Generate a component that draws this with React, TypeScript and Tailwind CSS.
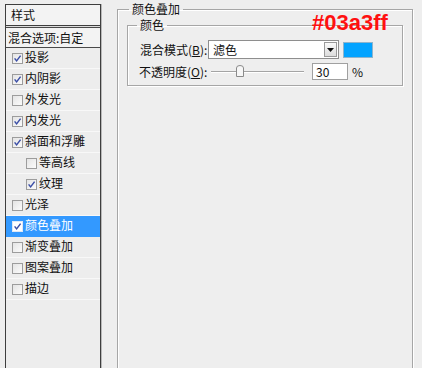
import React from "react";

interface StyleItem {
    label: string;
    checked: boolean;
    indent?: boolean;
    active?: boolean;
}

const items: StyleItem[] = [
    { label: "投影", checked: true },
    { label: "内阴影", checked: true },
    { label: "外发光", checked: false },
    { label: "内发光", checked: true },
    { label: "斜面和浮雕", checked: true },
    { label: "等高线", checked: false, indent: true },
    { label: "纹理", checked: true, indent: true },
    { label: "光泽", checked: false },
    { label: "颜色叠加", checked: true, active: true },
    { label: "渐变叠加", checked: false },
    { label: "图案叠加", checked: false },
    { label: "描边", checked: false },
];

const CheckBox: React.FC<{ checked: boolean; active?: boolean }> = ({ checked, active }) => (
    <span
        className={`flex w-[11px] h-[11px] shrink-0 items-center justify-center border ${
            active ? "border-[#dfe8f5] bg-white" : "border-[#9c9c9c] bg-gradient-to-br from-[#e4e4e4] to-[#fbfbfb]"
        }`}
    >
        {checked && (
            <svg width="9" height="9" viewBox="0 0 9 9">
                <path d="M1.6 4.4 L3.6 6.9 L7.6 1.6" stroke="#3b4ea6" strokeWidth="1.5" fill="none" />
            </svg>
        )}
    </span>
);

const StyleList: React.FC = () => (
    <div className="ml-[5px] mt-[4px] w-[96px] h-[380px] border border-[#3e3e3e] bg-[#ededed] shadow-[1px_0_0_#b8b8b8]">
        <div className="h-[21px] pl-[5px] flex items-center bg-[#f3f3f3] border-b border-[#3e3e3e]">样式</div>
        <div className="h-[1px] bg-[#dcdcdc]" />
        <div className="h-[21px] pl-[2px] flex items-center bg-[#f3f3f3] border-t border-b border-[#4a4a4a]">
            混合选项:自定
        </div>
        {items.map((it) => (
            <div
                key={it.label}
                className={`h-[21px] flex items-center gap-[2px] border-b ${
                    it.active ? "bg-[#3399ff] text-white border-[#3399ff]" : "border-[#f8f8f8]"
                } ${it.indent ? "pl-[20px]" : "pl-[6px]"}`}
            >
                <CheckBox checked={it.checked} active={it.active} />
                <span className="leading-none -mt-[2px]">{it.label}</span>
            </div>
        ))}
    </div>
);

const ColorOverlay: React.FC = () => (
    <div className="ml-[16px] pt-[1px] w-[296px]">
        <fieldset className="h-[400px] border border-[#a6a6a6] pl-[9px] pr-[9px] shadow-[inset_1px_1px_0_#fff,1px_1px_0_#fff]">
            <legend className="ml-[2px] px-[3px] leading-[16px]">颜色叠加</legend>
            <fieldset className="border border-[#a6a6a6] pl-[9px] pt-[7px] pb-[5px] shadow-[inset_1px_1px_0_#fff,1px_1px_0_#fff]">
                <legend className="px-[3px] leading-[16px]">颜色</legend>
                <div className="pl-[3px] flex items-center h-[19px]">
                    <span className="w-[68px]">
                        混合模式(<span className="underline">B</span>):
                    </span>
                    <div className="w-[131px] h-[19px] bg-white border border-[#8e8e8e] flex items-center justify-between pl-[4px] pr-[1px]">
                        <span className="leading-none">滤色</span>
                        <span className="w-[13px] h-[15px] border border-[#9a9a9a] bg-gradient-to-b from-[#fafafa] to-[#dcdcdc] flex items-center justify-center">
                            <svg width="7" height="4" viewBox="0 0 7 4">
                                <path d="M0 0 H7 L3.5 4 Z" fill="#111" />
                            </svg>
                        </span>
                    </div>
                    <span className="ml-[4px] w-[30px] h-[16px] bg-[#03a3ff] border border-[#8fb4cc]" />
                </div>
                <div className="pl-[2px] mt-[4px] flex items-center h-[17px]">
                    <span className="w-[72px]">
                        不透明度(<span className="underline">O</span>):
                    </span>
                    <div className="relative w-[93px] h-[17px] flex items-center">
                        <div className="w-full h-[2px] border-t border-[#a4a4a4] border-b-white bg-white" />
                        <svg className="absolute left-[25px] top-[2px]" width="8" height="12" viewBox="0 0 8 12">
                            <path d="M0.5 11.5 V3 Q0.5 0.5 4 0.5 Q7.5 0.5 7.5 3 V11.5 Z" fill="#f6f6f6" stroke="#8a8a8a" />
                        </svg>
                    </div>
                    <div className="ml-[8px] w-[36px] h-[17px] bg-white border border-[#a0a0a0] pl-[3px] flex items-center leading-none">
                        30
                    </div>
                    <span className="ml-[4px]">%</span>
                </div>
            </fieldset>
        </fieldset>
    </div>
);

export default function App() {
    return (
        <div
            className="relative w-[422px] h-[368px] overflow-hidden bg-[#eeeeee] text-[12px] text-[#111] flex"
            style={{ fontFamily: '"Noto Sans CJK SC", "Noto Sans", sans-serif' }}
        >
            <StyleList />
            <ColorOverlay />
            <div
                className="absolute left-[312px] top-[12px] text-[22px] font-bold leading-none text-[#ff1010]"
                style={{ fontFamily: '"Liberation Sans", Arial, sans-serif' }}
            >
                #03a3ff
            </div>
        </div>
    );
}
